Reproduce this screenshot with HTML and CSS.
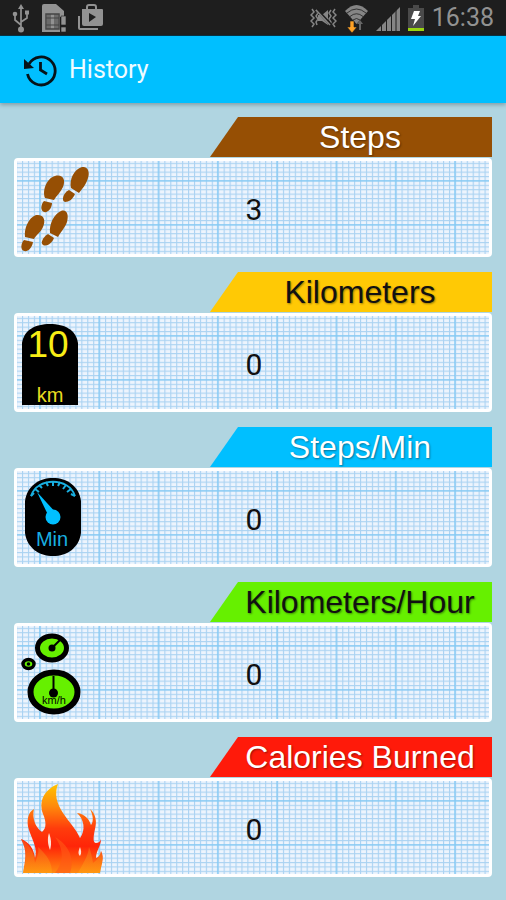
FILE: index.html
```html
<!DOCTYPE html>
<html lang="en">
<head>
  <meta charset="UTF-8">
  <meta name="viewport" content="width=device-width, initial-scale=1.0">
  <title>History</title>
  <link rel="stylesheet" href="styles.css">
</head>
<body>

<!-- shared graph paper pattern -->
<svg class="defs" width="0" height="0" aria-hidden="true">
  <defs>
    <pattern id="minor" x="5" y="1.8" width="5.93" height="4.4" patternUnits="userSpaceOnUse">
      <path d="M.5 0V4.4M0 .5H5.93" stroke="#9fcdf0" stroke-width="1.3" opacity=".85"/>
    </pattern>
    <pattern id="major" x="22" y="19" width="59.3" height="44" patternUnits="userSpaceOnUse">
      <path d="M.8 0V44M0 .8H59.3" stroke="#7bc8f5" stroke-width="1.3" opacity=".85"/>
    </pattern>
    <linearGradient id="fire" x1="0" y1="0" x2="0" y2="1">
      <stop offset="0" stop-color="#ffc400"/>
      <stop offset=".25" stop-color="#ff8a0c"/>
      <stop offset=".5" stop-color="#ff3c0c"/>
      <stop offset=".7" stop-color="#ff2508"/>
      <stop offset="1" stop-color="#ff8a10"/>
    </linearGradient>
    <linearGradient id="fire-side" x1="0" y1="0" x2="0" y2="1">
      <stop offset="0" stop-color="#f4511e"/>
      <stop offset="1" stop-color="#ffa010"/>
    </linearGradient>
  </defs>
</svg>

<div class="status-bar">
  <div class="status-group">
    <!-- usb -->
    <svg width="18" height="30" viewBox="0 0 18 30" fill="none" stroke="#929292" stroke-width="1.7">
      <path d="M9 5V27M9 22L3 17V11M9 19L15 15V10"/>
      <path d="M9 1L12 6H6Z" fill="#929292" stroke="none"/>
      <circle cx="9" cy="26.500" r="3" fill="#929292" stroke="none"/>
      <circle cx="3" cy="11" r="2.300" fill="#929292" stroke="none"/>
      <path d="M13 7.500h4v4h-4z" fill="#929292" stroke="none"/>
    </svg>
    <!-- sim card -->
    <svg width="24" height="30" viewBox="0 0 24 30">
      <path d="M0 3Q0 1 2 1H14L22 8V14H18V29H0Z" fill="#929292"/>
      <path d="M4 11H17V26H4Z" fill="#929292" stroke="#444" stroke-width="1.500"/>
      <path d="M4 15H8V22H4M17 15H13V22H17M8 11V15H13V11M8 26V22H13V26M6 11V26M15 11V26" fill="none" stroke="#444"/>
      <path d="M19 13H24V22H19ZM19 24H24V29H19Z" fill="#929292" stroke="#1e1e1e" stroke-width=".6"/>
    </svg>
    <!-- play store -->
    <svg width="26" height="30" viewBox="0 0 26 30">
      <path d="M9 7V4Q9 2 11 2H16Q18 2 18 4V7" fill="none" stroke="#929292" stroke-width="2"/>
      <path d="M4 6H24Q25 6 25 7V21Q25 23 23 23H6Q4 23 4 21Z" fill="#929292"/>
      <path d="M11 10L18 14L11 19Z" fill="#1e1e1e"/>
      <path d="M1 13V25Q1 26 2 26H20" fill="none" stroke="#929292" stroke-width="2"/>
    </svg>
  </div>
  <div class="status-group">
    <!-- vibrate -->
    <svg width="27" height="30" viewBox="0 0 27 30" fill="none" stroke="#858585" stroke-width="1.500">
      <path d="M2 6L4 9L1 12L4 15L1 18L4 21L2 24M6 7L8 10L6 13L8 16L6 19L7 22M25 6L23 9L26 12L23 15L26 18L23 21L25 24M21 7L19 10L21 13L19 16L21 19L20 22"/>
      <path d="M8 12H12L18 7V22L12 18H8Z" fill="#858585" stroke="none"/>
      <path d="M7 7L21 22" stroke="#1e1e1e" stroke-width="3"/>
      <path d="M6 7L20 22"/>
    </svg>
    <!-- wifi -->
    <svg width="25" height="30" viewBox="0 0 25 30" fill="none">
      <path d="M1 8Q12.500 -4 24 8L12.500 21Z" fill="#858585"/>
      <path d="M3 10Q12.500 2 22 10M6 13.500Q12.500 8 19 13.500M9 17Q12.500 14 16 17" stroke="#1e1e1e" stroke-width=".8"/>
      <path d="M6 18H10V24H13L8 30L3 24H6Z" fill="#ffa226" stroke="#1e1e1e" stroke-width=".6"/>
      <path d="M15 27V21H13L16 17L19 21H17V27Z" fill="#666"/>
    </svg>
    <!-- signal -->
    <svg width="24" height="30" viewBox="0 0 24 30">
      <path d="M0 28L24 4V28Z" fill="#858585"/>
      <path d="M5.500 18V28M10.500 14V28M15.500 9V28M20 5V28" stroke="#1e1e1e" stroke-width="1"/>
    </svg>
    <!-- battery -->
    <svg width="18" height="30" viewBox="0 0 18 30">
      <path d="M6 2H12V5H17V28H1V5H6Z" fill="#4a4a4a"/>
      <path d="M1 25H17V28H1Z" fill="#99d411"/>
      <path d="M7 8H13L11 13H14L6 23L8 16H4Z" fill="#fff"/>
    </svg>
    <span class="clock">16:38</span>
  </div>
</div>

<header class="app-bar">
  <svg width="34" height="34" viewBox="0 0 34 34" fill="none" stroke="#061319" stroke-width="2.800">
    <path d="M4.500 21A14 14 0 1 0 6 11"/>
    <path d="M1 6V16L11 15Z" fill="#061319" stroke="none"/>
    <path d="M17.500 9V17L24 21"/>
  </svg>
  <h1>History</h1>
</header>

<main>

  <!-- steps -->
  <section class="stat">
    <h2 class="tag brown">Steps</h2>
    <div class="card">
      <svg class="paper" aria-hidden="true"><rect width="100%" height="100%" fill="url(#minor)"/><rect width="100%" height="100%" fill="url(#major)"/></svg>
      <svg class="icon" width="90" height="93" viewBox="0 0 90 93" fill="#964f04">
        <path d="M54 27C52 19 57 8 65 6C71 5 73 11 71 17C69 24 65 28 62 32Z"/>
        <path d="M52 29L58 33C56 38 52 41 48 41C44 40 46 32 52 29Z"/>
        <path d="M28 37C25 29 30 17 38 15C46 13 49 19 46 26C44 31 39 35 37 39Z"/>
        <path d="M27 40L35 42C35 47 31 52 27 51C23 50 24 43 27 40Z"/>
        <path d="M33 72C32 63 37 53 44 50C50 48 52 54 50 61C48 67 43 72 41 76Z"/>
        <path d="M31 73L37 77C35 82 30 86 26 84C23 82 26 76 31 73Z"/>
        <path d="M8 76C7 68 11 57 19 54C27 53 29 59 26 66C24 71 19 74 17 78Z"/>
        <path d="M7 79L16 81C15 87 11 91 7 90C3 89 4 82 7 79Z"/>
      </svg>
      <p class="value">3</p>
    </div>
  </section>

  <!-- kilometers -->
  <section class="stat">
    <h2 class="tag yellow">Kilometers</h2>
    <div class="card">
      <svg class="paper" aria-hidden="true"><rect width="100%" height="100%" fill="url(#minor)"/><rect width="100%" height="100%" fill="url(#major)"/></svg>
      <svg class="icon" width="90" height="93" viewBox="0 0 90 93">
        <path d="M5 89V27C7 14 18 8 33 8C48 8 59 14 61 27V89Z"/>
        <text class="dial-number" x="31" y="41" fill="#f8ee16">10</text>
        <text class="dial-unit" x="33" y="86" fill="#e8dd20">km</text>
      </svg>
      <p class="value">0</p>
    </div>
  </section>

  <!-- steps per minute -->
  <section class="stat">
    <h2 class="tag blue">Steps/Min</h2>
    <div class="card">
      <svg class="paper" aria-hidden="true"><rect width="100%" height="100%" fill="url(#minor)"/><rect width="100%" height="100%" fill="url(#major)"/></svg>
      <svg class="icon" width="90" height="93" viewBox="0 0 90 93">
        <path d="M8 30C10 15 22 7 36 7C50 7 62 15 64 30V62C62 77 50 85 36 85C22 85 10 77 8 62Z"/>
        <path d="M14 25C20 6 52 6 58 25" fill="none" stroke="#19afe0" stroke-width="1.800"/>
        <path d="M14 25L17 22M18 18L22 21M22 14L25 17M29 11L31 15M36 10V15M43 11L41 15M49 14L46 18M54 18L50 21M58 25L54 23" stroke="#19afe0" stroke-width="2"/>
        <path d="M20 21L40 43L32 46Z" fill="#00bfff"/>
        <circle cx="36" cy="46" r="7.500" fill="#00bfff"/>
        <text class="dial-unit" x="35" y="75" fill="#19afe0">Min</text>
      </svg>
      <p class="value">0</p>
    </div>
  </section>

  <!-- kilometers per hour -->
  <section class="stat">
    <h2 class="tag green">Kilometers/Hour</h2>
    <div class="card">
      <svg class="paper" aria-hidden="true"><rect width="100%" height="100%" fill="url(#minor)"/><rect width="100%" height="100%" fill="url(#major)"/></svg>
      <svg class="icon" width="90" height="93" viewBox="0 0 90 93">
        <ellipse cx="35" cy="22" rx="14.500" ry="12" fill="#66f000" stroke="#000" stroke-width="5"/>
        <path d="M35 22L43 14" stroke="#000" stroke-width="2"/>
        <circle cx="35" cy="22" r="3.500"/>
        <ellipse cx="11.500" cy="38" rx="5.500" ry="4.500" fill="#66f000" stroke="#000" stroke-width="3.500"/>
        <circle cx="11.500" cy="38" r="1.800"/>
        <ellipse cx="37" cy="66" rx="23.500" ry="19.500" fill="#66f000" stroke="#000" stroke-width="6"/>
        <path d="M36.500 50V66" stroke="#000" stroke-width="2"/>
        <circle cx="36.500" cy="67" r="4.500"/>
        <text class="dial-small" x="37" y="78">km/h</text>
      </svg>
      <p class="value">0</p>
    </div>
  </section>

  <!-- calories -->
  <section class="stat">
    <h2 class="tag red">Calories Burned</h2>
    <div class="card">
      <svg class="paper" aria-hidden="true"><rect width="100%" height="100%" fill="url(#minor)"/><rect width="100%" height="100%" fill="url(#major)"/></svg>
      <svg class="icon" width="90" height="93" viewBox="0 0 90 93">
        <path d="M6 92C8 80 11 70 4 58C12 61 17 68 18 77C21 68 15 58 12 49C9 40 11 31 17 28C15 37 18 46 25 51C30 47 29 40 26 33C21 18 29 8 41 3C37 13 40 23 46 32C52 41 59 48 63 57C69 49 67 38 60 32C68 33 72 38 74 44C77 40 76 34 73 28C79 33 80 41 78 48C76 57 76 62 79 62C81 62 83 61 84 58C84 65 79 70 79 77C82 76 84 73 84 70C88 77 84 84 83 92Z" fill="url(#fire)"/>
        <path d="M32 52C30 58 31 64 33 69C35 63 34 57 32 52ZM63 66C61 71 61 73 63 75C65 72 64 69 63 66Z" fill="#ffe0d5"/>
        <path d="M6 92C9 80 11 70 4 58C15 65 17 74 18 82C21 74 22 70 21 66C31 75 35 82 35 92ZM61 92C66 82 71 76 72 66C74 71 75 76 76 82Q82 78 84 70C87 77 84 84 83 92Z" fill="url(#fire-side)" opacity=".65"/>
        <path d="M38 92C48 80 46 67 38 56C52 64 58 78 53 92Z" fill="#ff5a16" opacity=".6"/>
      </svg>
      <p class="value">0</p>
    </div>
  </section>

</main>

</body>
</html>
```
FILE: styles.css
```css
* {
  box-sizing: border-box;
}

body {
  margin: 0;
  background-color: #b0d5e1;
  font-family: Roboto, "Liberation Sans", sans-serif;
  color: #111;
}

svg {
  display: block;
}

.defs {
  position: absolute;
}

.status-bar {
  display: flex;
  justify-content: space-between;
  align-items: center;
  height: 36px;
  padding: 0 12px;
  background-color: #1e1e1e;
  border-bottom: 1px solid #083446;
}

.status-group {
  display: flex;
  align-items: center;
  gap: 7px;
}

.status-group:first-child {
  gap: 12px;
}

.clock {
  font-size: 25px;
  line-height: 30px;
  color: #929292;
}

.app-bar {
  display: flex;
  align-items: center;
  gap: 12px;
  height: 67px;
  padding: 0 23px;
  background-color: #00bfff;
  box-shadow: 0 2px 4px rgba(0, 0, 0, 0.25);
}

.app-bar h1 {
  margin: 0;
  font-size: 25px;
  font-weight: 400;
  color: #f0fbff;
}

main {
  display: flex;
  flex-direction: column;
  gap: 15px;
  padding: 14px 14px 24px;
}

.tag {
  width: 59%;
  height: 40px;
  margin: 0 0 1px auto;
  padding-left: 18px;
  font-family: "Liberation Sans", Arial, sans-serif;
  font-size: 32px;
  font-weight: 400;
  line-height: 40px;
  text-align: center;
  white-space: nowrap;
  text-shadow: 1px 1px 2px rgba(0, 0, 0, 0.4);
  clip-path: polygon(28px 0, 100% 0, 100% 100%, 0 100%);
}

.brown {
  background-color: #964f04;
  color: #fff;
}

.yellow {
  background-color: #ffc905;
}

.blue {
  background-color: #00bfff;
  color: #fff;
}

.green {
  background-color: #66f000;
}

.red {
  background-color: #ff1a0a;
  color: #fff;
}

.card {
  display: grid;
  align-items: center;
  overflow: hidden;
  background-color: #edf4fd;
  border: 3px solid #fff;
  border-radius: 4px;
}

/* paper, icon and value share one cell */
.paper,
.icon,
.value {
  grid-area: 1 / 1;
}

/* takes its height from the icon next to it */
.paper {
  width: 100%;
  height: 0;
  min-height: 100%;
}

.value {
  margin: 0;
  padding: 4px 0 0 2px;
  font-size: 30px;
  line-height: 36px;
  text-align: center;
}

.icon text {
  font-family: "Liberation Sans", sans-serif;
  text-anchor: middle;
}

.icon .dial-number {
  font-size: 37px;
}

.icon .dial-unit {
  font-size: 20px;
}

.icon .dial-small {
  font-size: 11px;
}
```
